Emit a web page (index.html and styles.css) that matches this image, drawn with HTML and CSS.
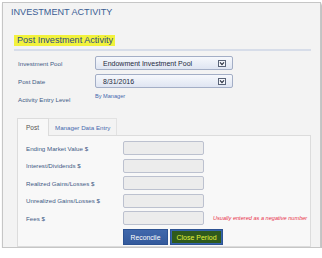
FILE: index.html
```html
<!DOCTYPE html>
<html>
<head>
<meta charset="utf-8">
<link rel="stylesheet" href="styles.css">
</head>
<body>
<div class="frame">
  <div class="page-title">INVESTMENT ACTIVITY</div>
  <div class="section">
    <div class="section-head"><span class="hl">Post Investment Activity</span></div>
    <div class="rule"></div>
    <div class="form">
      <div class="lbl">Investment Pool</div>
      <div class="select"><span>Endowment Investment Pool</span><span class="arrow"><svg width="8" height="7" viewBox="0 0 8 7"><rect x="0.5" y="0.5" width="7" height="6" fill="#f4f6fb" stroke="#5a6478"/><path d="M2 2.4 L4 4.6 L6 2.4" fill="none" stroke="#2a3040" stroke-width="1.2"/></svg></span></div>
      <div class="lbl">Post Date</div>
      <div class="select"><span>8/31/2016</span><span class="arrow"><svg width="8" height="7" viewBox="0 0 8 7"><rect x="0.5" y="0.5" width="7" height="6" fill="#f4f6fb" stroke="#5a6478"/><path d="M2 2.4 L4 4.6 L6 2.4" fill="none" stroke="#2a3040" stroke-width="1.2"/></svg></span></div>
      <div class="lbl">Activity Entry Level</div>
      <div class="val">By Manager</div>
    </div>
    <div class="tabs">
      <div class="tab active">Post</div>
      <div class="tab">Manager Data Entry</div>
    </div>
    <div class="panel">
      <div class="fields">
        <div class="flbl">Ending Market Value $</div><div class="input"></div><div></div>
        <div class="flbl">Interest/Dividends $</div><div class="input"></div><div></div>
        <div class="flbl">Realized Gains/Losses $</div><div class="input"></div><div></div>
        <div class="flbl">Unrealized Gains/Losses $</div><div class="input"></div><div></div>
        <div class="flbl">Fees $</div><div class="input"></div><div class="note">Usually entered as a negative number</div>
      </div>
      <div class="buttons">
        <div class="btn">Reconcile</div>
        <div class="btn close"><span>Close Period</span></div>
      </div>
    </div>
  </div>
</div>
</body>
</html>
```

FILE: styles.css
```css
html, body {
  margin: 0;
  padding: 0;
  background: #ffffff;
  font-family: "Liberation Sans", Arial, sans-serif;
}
.frame {
  margin: 2px 0 0 2px;
  width: 319px;
  height: 246px;
  box-sizing: border-box;
  border: 1px solid #c6c6c6;
  background: #f3f3f3;
  box-shadow: 1px 2px 2px rgba(0, 0, 0, 0.35);
}
.page-title {
  padding: 4px 0 0 8px;
  font-size: 9.1px;
  line-height: 11px;
  height: 11px;
  color: #3a5d94;
}
.section {
  padding: 0 9px 0 11px;
}
.section-head {
  margin-top: 17px;
  height: 11px;
  display: flex;
}
.hl {
  display: block;
  background: #f2f23c;
  padding: 0 2px 0 3px;
  font-size: 9.1px;
  line-height: 11px;
  color: #2c4c82;
}
.rule {
  margin-top: 3px;
  height: 2px;
  background: #d7dde9;
}
.form {
  margin-top: 5px;
  padding-left: 4px;
  display: grid;
  grid-template-columns: 77px 138px;
  grid-auto-rows: 14px;
  row-gap: 4px;
  align-items: center;
}
.lbl {
  font-size: 6.2px;
  color: #3f5a85;
}
.select {
  height: 14px;
  box-sizing: border-box;
  border: 1px solid #a3aec6;
  border-radius: 2px;
  background: linear-gradient(#f6f8fc, #dfe5f2);
  display: flex;
  align-items: center;
  justify-content: space-between;
  padding: 0 6px 0 7px;
  font-size: 7px;
  color: #1e2a40;
}
.arrow {
  display: flex;
}
.val {
  font-size: 5.6px;
  color: #4468ad;
  align-self: start;
  padding-top: 1px;
}
.tabs {
  margin: 12px 0 0 3px;
  display: flex;
  height: 17px;
  position: relative;
  z-index: 1;
}
.tab {
  box-sizing: border-box;
  height: 17px;
  padding: 0 6px;
  display: flex;
  align-items: center;
  font-size: 6.2px;
  color: #4769ae;
  border: 1px solid #e2e2e2;
  border-left: none;
  border-bottom: none;
}
.tab.active {
  width: 32px;
  padding: 0 0 0 8px;
  border: 1px solid #dcdcdc;
  border-bottom: none;
  background: #f8f8f8;
  color: #555555;
  font-size: 6.5px;
  height: 18px;
}
.panel {
  margin-left: 3px;
  height: 112px;
  box-sizing: border-box;
  border: 1px solid #dcdcdc;
  background: #f8f8f8;
  padding: 5px 0 0 8px;
}
.fields {
  display: grid;
  grid-template-columns: 97px 81px auto;
  grid-auto-rows: 14px;
  row-gap: 3.5px;
  align-items: center;
}
.flbl {
  font-size: 6.2px;
  color: #3f5a85;
}
.input {
  height: 14px;
  box-sizing: border-box;
  border: 1px solid #bcc1cf;
  border-radius: 2px;
  background: #ececec;
}
.note {
  padding-left: 9px;
  font-size: 5.6px;
  font-style: italic;
  color: #e8334a;
  white-space: nowrap;
}
.buttons {
  margin-top: 4px;
  padding-left: 97px;
  display: flex;
  gap: 1px;
}
.btn {
  height: 16px;
  width: 45px;
  box-sizing: border-box;
  border: 1px solid #2d5292;
  background: linear-gradient(#4068ac, #345a9c);
  color: #ffffff;
  font-size: 6.8px;
  display: flex;
  align-items: center;
  justify-content: center;
}
.btn.close {
  width: 53px;
  margin-left: 1px;
  padding: 1px;
  background: #3564ac;
}
.btn.close span {
  flex: 1;
  align-self: stretch;
  display: flex;
  align-items: center;
  justify-content: center;
  background: #2f5a1c;
  color: #e2f23a;
  font-size: 7px;
}
```
